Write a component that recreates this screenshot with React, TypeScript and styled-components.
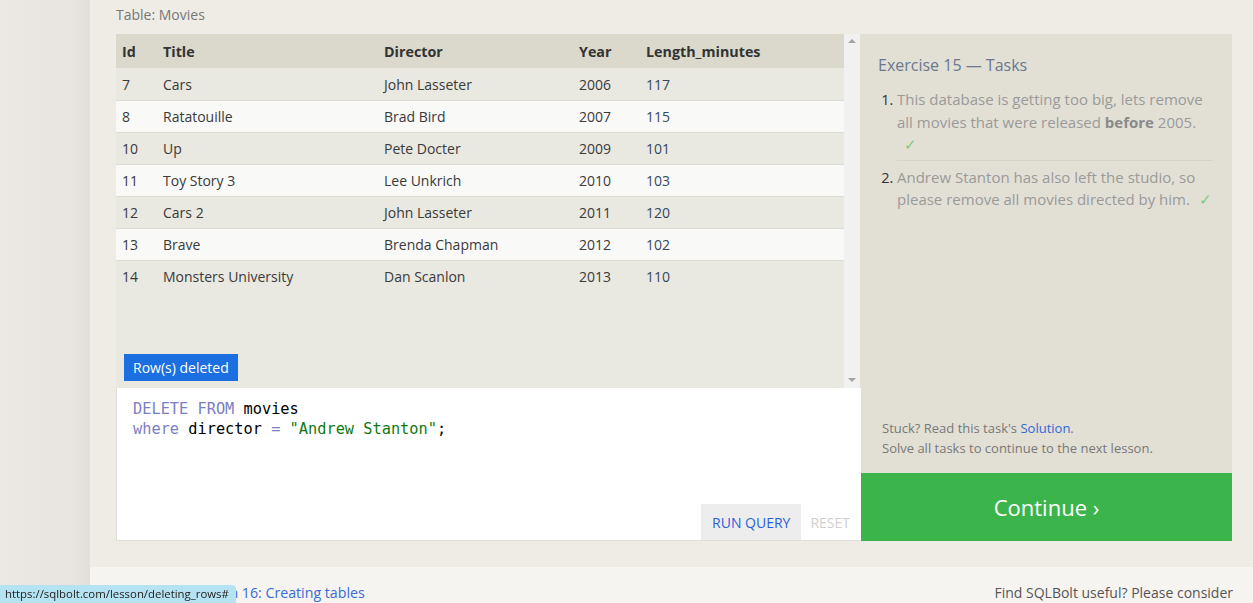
import React from "react";
import styled, { createGlobalStyle } from "styled-components";

const Global = createGlobalStyle`
  html, body { margin: 0; padding: 0; }
  body {
    font-family: "Open Sans", "Noto Sans", Arial, sans-serif;
    background: #f5f4f1;
    color: #333;
    overflow: hidden;
  }
`;

const Page = styled.div`
  display: grid;
  grid-template-columns: 90px 1fr;
  width: 1253px;
  height: 603px;
`;

const Side = styled.div`
  background: linear-gradient(to right, #ece9e5 0%, #e8e4e0 80%, #e2ded9 100%);
`;

const Main = styled.div`
  display: flex;
  flex-direction: column;
`;

const Lesson = styled.div`
  background: #efece6;
  padding: 0 21px 26px 26px;
`;

const TableTitle = styled.div`
  height: 34px;
  line-height: 29px;
  font-size: 14px;
  color: #777;
`;

const Workspace = styled.div`
  display: grid;
  grid-template-columns: 745px 1fr;
`;

const LeftCol = styled.div`
  display: flex;
  flex-direction: column;
`;

const TablePane = styled.div`
  position: relative;
  height: 354px;
  background: #e9e8e1;
  display: grid;
  grid-template-columns: 1fr 16px 1px;
`;

const TableArea = styled.div`
  display: flex;
  flex-direction: column;
`;

const Row = styled.div<{ $head?: boolean; $alt?: boolean }>`
  display: grid;
  grid-template-columns: 41px 221px 195px 67px 1fr;
  padding-left: 6px;
  height: ${(p) => (p.$head ? "34px" : "32px")};
  align-items: center;
  background: ${(p) => (p.$head ? "#dad9cc" : p.$alt ? "#f9f9f8" : "#e9e8e1")};
  border-top: ${(p) => (p.$head ? "none" : "1px solid #dcdbd4")};
  box-sizing: border-box;
  font-size: ${(p) => (p.$head ? "14.3px" : "14px")};
  font-weight: ${(p) => (p.$head ? 700 : 400)};
  color: ${(p) => (p.$head ? "#333" : "#3a3a3a")};
  &:nth-child(2) { border-top: none; }
`;

const Cell = styled.div<{ $num?: boolean }>`
  white-space: nowrap;
  color: ${(p) => (p.$num ? "#34495e" : "inherit")};
`;

const Scrollbar = styled.div`
  background: #f1f1f1;
  display: flex;
  flex-direction: column;
  justify-content: space-between;
  align-items: center;
  padding: 5px 0 6px;
`;

const Gutter = styled.div`
  background: #e2e0d5;
`;

const Arrow = styled.div<{ $down?: boolean }>`
  width: 0;
  height: 0;
  border-left: 4px solid transparent;
  border-right: 4px solid transparent;
  ${(p) =>
    p.$down ? "border-top: 4px solid #a3a3a3;" : "border-bottom: 4px solid #a3a3a3;"}
`;

const Badge = styled.div`
  position: absolute;
  left: 8px;
  bottom: 7px;
  background: #1b6fe0;
  color: #fff;
  font-size: 14px;
  padding: 0 9px;
  height: 27px;
  line-height: 27px;
`;

const Editor = styled.div`
  height: 153px;
  box-sizing: border-box;
  background: #fff;
  border: 1px solid #e0ded8;
  border-top: none;
  border-right: none;
  display: flex;
  flex-direction: column;
  justify-content: space-between;
`;

const Code = styled.pre`
  margin: 0;
  padding: 11px 0 0 16px;
  font-family: "DejaVu Sans Mono", "Liberation Mono", monospace;
  font-size: 15.3px;
  line-height: 20px;
  color: #000;
`;

const Kw = styled.span`
  color: #7a7fc2;
`;

const Str = styled.span`
  color: #107a10;
`;

const Actions = styled.div`
  display: flex;
  justify-content: flex-end;
  align-items: stretch;
  height: 36px;
`;

const ActionButton = styled.div<{ $primary?: boolean }>`
  display: flex;
  align-items: center;
  padding: ${(p) => (p.$primary ? "0 11px" : "0 11px 0 9px")};
  font-size: 14px;
  background: ${(p) => (p.$primary ? "#ededed" : "transparent")};
  color: ${(p) => (p.$primary ? "#2b5fd9" : "#cfcfcf")};
`;

const RightCol = styled.div`
  display: flex;
  flex-direction: column;
`;

const Tasks = styled.div`
  flex: 1;
  background: #e2e0d5;
  padding: 20px 19px 0 17px;
  display: flex;
  flex-direction: column;
`;

const TasksTitle = styled.div`
  font-size: 16px;
  color: #6b7890;
  line-height: 22px;
`;

const TaskList = styled.ol`
  margin: 12px 0 0;
  padding: 0 0 0 19px;
  font-size: 15px;
  line-height: 22.5px;
  color: #9a9a9a;
  & > li::marker { color: #333; font-size: 14.5px; }
`;

const Task = styled.li<{ $first?: boolean }>`
  padding: ${(p) => (p.$first ? "0 0 4px" : "5px 0 0")};
  border-bottom: ${(p) => (p.$first ? "1px solid #d6d4c9" : "none")};
  b { color: #8a8a8a; }
`;

const Check = styled.span<{ $ownLine?: boolean }>`
  color: #7ccb7e;
  font-size: 15px;
  margin-left: ${(p) => (p.$ownLine ? "7px" : "5px")};
  display: ${(p) => (p.$ownLine ? "block" : "inline")};
`;

const Hint = styled.div`
  margin-top: auto;
  padding: 0 0 15px 4px;
  font-size: 13px;
  line-height: 20px;
  color: #787878;
  a { color: #2f68d6; text-decoration: none; }
`;

const Continue = styled.div`
  height: 68px;
  background: #3bb54b;
  color: #fff;
  font-size: 22px;
  display: flex;
  align-items: center;
  justify-content: center;
`;

const Footer = styled.div`
  flex: 1;
  background: #f5f4f1;
  display: flex;
  justify-content: space-between;
  align-items: flex-end;
  padding: 0 20px 0 102px;
  line-height: 20px;
`;

const NextLink = styled.a`
  color: #3a6bd6;
  text-decoration: none;
  font-size: 14.2px;
`;

const Support = styled.span`
  color: #555;
  font-size: 14px;
`;

const StatusTip = styled.div`
  position: fixed;
  left: 0;
  bottom: 0;
  height: 18px;
  line-height: 18px;
  padding: 0 7px 0 5px;
  background: #b6e3f1;
  border-top-right-radius: 4px;
  font-family: "Open Sans", Arial, sans-serif;
  font-size: 11.4px;
  color: #222;
`;

const rows = [
  ["7", "Cars", "John Lasseter", "2006", "117"],
  ["8", "Ratatouille", "Brad Bird", "2007", "115"],
  ["10", "Up", "Pete Docter", "2009", "101"],
  ["11", "Toy Story 3", "Lee Unkrich", "2010", "103"],
  ["12", "Cars 2", "John Lasseter", "2011", "120"],
  ["13", "Brave", "Brenda Chapman", "2012", "102"],
  ["14", "Monsters University", "Dan Scanlon", "2013", "110"],
];

export default function App() {
  return (
    <>
      <Global />
      <Page>
        <Side />
        <Main>
          <Lesson>
            <TableTitle>Table: Movies</TableTitle>
            <Workspace>
              <LeftCol>
                <TablePane>
                  <TableArea>
                    <Row $head>
                      <Cell>Id</Cell>
                      <Cell>Title</Cell>
                      <Cell>Director</Cell>
                      <Cell>Year</Cell>
                      <Cell>Length_minutes</Cell>
                    </Row>
                    {rows.map((r, i) => (
                      <Row key={r[0]} $alt={i % 2 === 1}>
                        <Cell>{r[0]}</Cell>
                        <Cell>{r[1]}</Cell>
                        <Cell>{r[2]}</Cell>
                        <Cell>{r[3]}</Cell>
                        <Cell $num>{r[4]}</Cell>
                      </Row>
                    ))}
                  </TableArea>
                  <Scrollbar>
                    <Arrow />
                    <Arrow $down />
                  </Scrollbar>
                  <Gutter />
                  <Badge>Row(s) deleted</Badge>
                </TablePane>
                <Editor>
                  <Code>
                    <Kw>DELETE FROM</Kw> movies{"\n"}
                    <Kw>where</Kw> director <Kw>=</Kw> <Str>"Andrew Stanton"</Str>;
                  </Code>
                  <Actions>
                    <ActionButton $primary>RUN QUERY</ActionButton>
                    <ActionButton>RESET</ActionButton>
                  </Actions>
                </Editor>
              </LeftCol>
              <RightCol>
                <Tasks>
                  <TasksTitle>Exercise 15 — Tasks</TasksTitle>
                  <TaskList>
                    <Task $first>
                      This database is getting too big, lets remove all movies that were
                      released <b>before</b> 2005. <Check $ownLine>✓</Check>
                    </Task>
                    <Task>
                      Andrew Stanton has also left the studio, so please remove all movies
                      directed by him. <Check>✓</Check>
                    </Task>
                  </TaskList>
                  <Hint>
                    Stuck? Read this task's <a href="#">Solution</a>.<br />
                    Solve all tasks to continue to the next lesson.
                  </Hint>
                </Tasks>
                <Continue>Continue ›</Continue>
              </RightCol>
            </Workspace>
          </Lesson>
          <Footer>
            <NextLink href="#">Lesson 16: Creating tables</NextLink>
            <Support>Find SQLBolt useful? Please consider</Support>
          </Footer>
        </Main>
      </Page>
      <StatusTip>https://sqlbolt.com/lesson/deleting_rows#</StatusTip>
    </>
  );
}
